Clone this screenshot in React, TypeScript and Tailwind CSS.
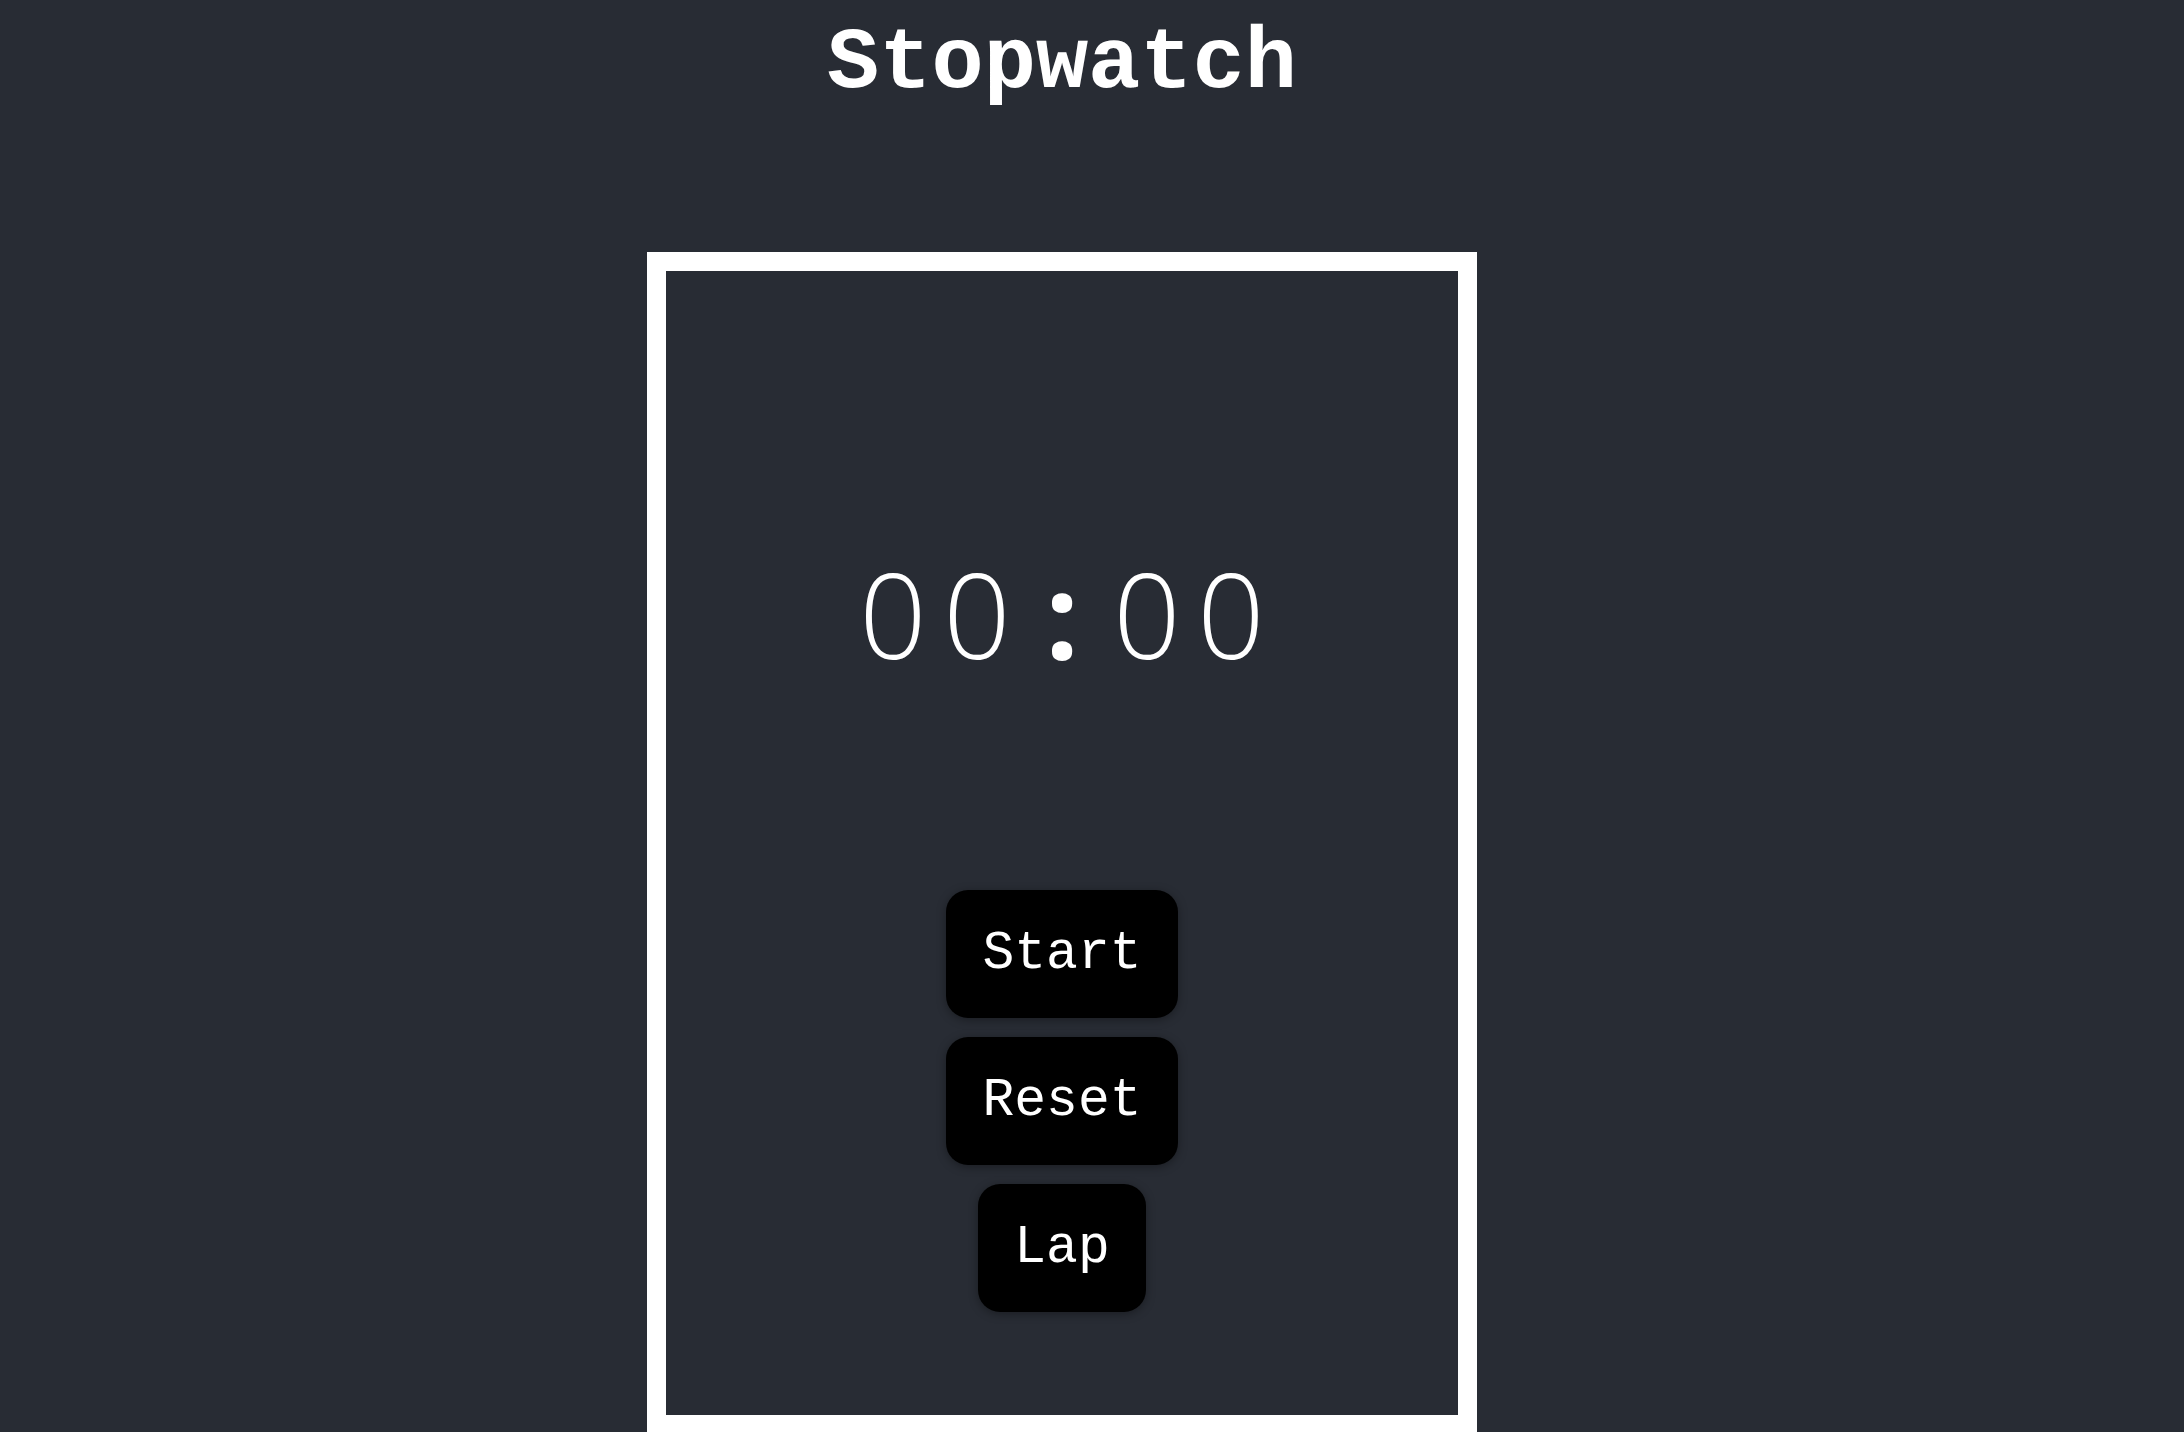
import React, { useEffect, useRef, useState } from "react";

const pad = (n: number) => String(n).padStart(2, "0");

export default function App() {
  const [time, setTime] = useState(0);
  const [running, setRunning] = useState(false);
  const [laps, setLaps] = useState<number[]>([]);
  const timer = useRef<number | null>(null);

  useEffect(() => {
    if (!running) return;
    timer.current = window.setInterval(() => setTime((t) => t + 1), 1000);
    return () => {
      if (timer.current) window.clearInterval(timer.current);
    };
  }, [running]);

  const minutes = pad(Math.floor(time / 60));
  const seconds = pad(time % 60);

  return (
    <div className="h-screen overflow-hidden bg-[#282c34] text-white">
      <div className="flex flex-col items-center pr-[60px]">
        {/* Title */}
        <h1 className="pt-[15px] font-['Courier_New','Liberation_Mono',monospace] text-[87px] leading-[99px] font-bold">
          Stopwatch
        </h1>

        {/* Watch box */}
        <div className="mt-[138px] flex h-[1182px] w-[830px] shrink-0 flex-col items-center border-[19px] border-white">
          <div className="flex pt-[284px] font-['Open_Sans',sans-serif] text-[118px] leading-[118px] font-light">
            {minutes.split("").map((d, i) => (
              <span key={"m" + i} className="inline-block w-[84px] text-center">
                {d}
              </span>
            ))}
            <span className="inline-block w-[86px] text-center font-bold">:</span>
            {seconds.split("").map((d, i) => (
              <span key={"s" + i} className="inline-block w-[84px] text-center">
                {d}
              </span>
            ))}
          </div>

          <div className="mt-[217px] flex flex-col items-center gap-[19px] font-['Courier_New','Liberation_Mono',monospace] text-[53px] leading-[60px]">
            <button
              onClick={() => setRunning(!running)}
              className="rounded-[22px] bg-black px-[36px] py-[34px] shadow-[0_2px_10px_rgba(0,0,0,0.35)]"
            >
              {running ? "Stop" : "Start"}
            </button>
            <button
              onClick={() => {
                setRunning(false);
                setTime(0);
                setLaps([]);
              }}
              className="rounded-[22px] bg-black px-[36px] py-[34px] shadow-[0_2px_10px_rgba(0,0,0,0.35)]"
            >
              Reset
            </button>
            <button
              onClick={() => setLaps([...laps, time])}
              className="rounded-[22px] bg-black px-[36px] py-[34px] shadow-[0_2px_10px_rgba(0,0,0,0.35)]"
            >
              Lap
            </button>
          </div>
        </div>
      </div>
    </div>
  );
}
